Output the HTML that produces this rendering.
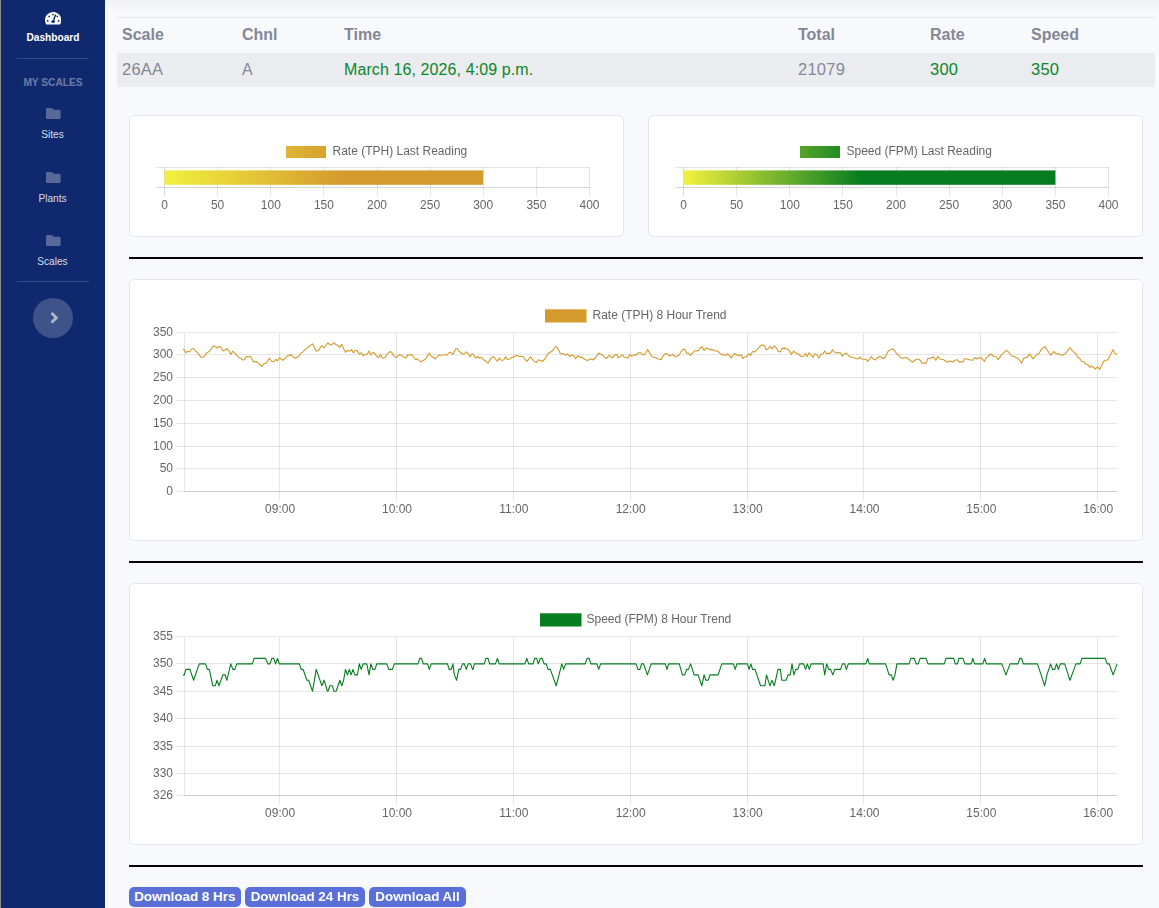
<!DOCTYPE html>
<html><head><meta charset="utf-8">
<style>
*{box-sizing:border-box;margin:0;padding:0}
html,body{width:1159px;height:908px;overflow:hidden;background:#f8f9fc;font-family:"Liberation Sans",sans-serif;}
body{position:relative}
#edge{position:absolute;left:0;top:0;width:1px;height:908px;background:#8a8a8a;z-index:5}
#sb{position:absolute;left:0;top:0;width:105px;height:908px;background:#10296e;color:#fff}
#sb .t{position:absolute;left:0;width:105px;text-align:center;font-size:10.4px;line-height:12px;white-space:nowrap}
#sb .dv{position:absolute;left:17px;width:72px;height:1px;background:rgba(255,255,255,.16)}
#sb svg{position:absolute}
#shadow{position:absolute;left:105px;top:0;width:1054px;height:12px;background:linear-gradient(#f0f1f4,#f8f9fc)}
table{position:absolute;left:117px;top:17px;width:1038px;border-collapse:collapse;font-size:16px;color:#858796}
th,td{text-align:left;padding:0 0 0 5px;font-weight:400;white-space:nowrap}
th{height:35px;font-weight:700;border-top:1px solid #e3e6f0;}
td{height:34px;background:#ebecef}
.g{color:#0a872a}
.n{font-size:16.5px;letter-spacing:.25px}
.card{position:absolute;background:#fff;border:1px solid #e3e6f0;border-radius:5.6px}
.hr{position:absolute;left:129px;width:1014px;height:2px;background:#000}
.btn{position:absolute;top:887px;height:20px;background:#5a70d8;color:#fff;border-radius:5px;font-weight:700;font-size:13.4px;line-height:19px;text-align:center;white-space:nowrap}
svg text{font-family:"Liberation Sans",sans-serif;font-size:12px;fill:#666}
</style></head><body>
<div id="sb">
  <div class="t" style="top:32.3px;font-weight:700;font-size:10.15px;left:0.5px">Dashboard</div>
  <div class="dv" style="top:58px"></div>
  <div class="t" style="top:77px;font-weight:700;font-size:10.2px;left:0.5px;color:rgba(255,255,255,.4)">MY SCALES</div>
  <div class="t" style="top:128.6px;font-size:10.1px;color:rgba(255,255,255,.85)">Sites</div>
  <div class="t" style="top:192.6px;font-size:10.1px;color:rgba(255,255,255,.85)">Plants</div>
  <div class="t" style="top:255.6px;font-size:10.1px;color:rgba(255,255,255,.85)">Scales</div>
  <div class="dv" style="top:281px"></div>
  <div style="position:absolute;left:33px;top:298px;width:40px;height:40px;border-radius:50%;background:rgba(255,255,255,.2)"></div>

<svg style="left:45.1px;top:10.5px" width="16.3" height="14.5" viewBox="0 0 576 512"><path fill="#fff" d="M288 32C128.940 32 0 160.940 0 320c0 52.800 14.250 102.260 39.060 144.800 5.610 9.620 16.300 15.200 27.440 15.200h443c11.140 0 21.830-5.580 27.440-15.200C561.750 422.260 576 372.800 576 320c0-159.060-128.940-288-288-288zm0 64c14.710 0 26.580 10.130 30.320 23.650-1.110 2.260-2.640 4.230-3.450 6.670l-9.220 27.670c-5.130 3.490-10.970 6.010-17.640 6.010-17.670 0-32-14.330-32-32S270.330 96 288 96zM96 384c-17.670 0-32-14.330-32-32s14.330-32 32-32 32 14.330 32 32-14.330 32-32 32zm48-160c-17.670 0-32-14.330-32-32s14.330-32 32-32 32 14.330 32 32-14.330 32-32 32zm246.770-72.410l-61.330 184C343.130 347.330 352 364.540 352 384c0 11.720-3.380 22.550-8.880 32H232.880c-5.500-9.450-8.880-20.280-8.880-32 0-33.940 26.500-61.430 59.900-63.590l61.340-184.010c4.170-12.560 17.730-19.450 30.360-15.170 12.570 4.190 19.350 17.790 15.170 30.360zm14.660 57.200l15.520-46.550c3.470-1.290 7.130-2.230 11.050-2.230 17.670 0 32 14.330 32 32s-14.330 32-32 32c-11.380-.010-20.890-6.280-26.570-15.220zM480 384c-17.670 0-32-14.330-32-32s14.330-32 32-32 32 14.330 32 32-14.330 32-32 32z"/></svg>
<svg style="left:46.1px;top:108px" width="14.6" height="11" viewBox="0 0 512 384" preserveAspectRatio="none"><path fill="rgba(255,255,255,.3)" d="M464 64H272l-64-64H48C21.490 0 0 21.490 0 48v288c0 26.510 21.490 48 48 48h416c26.510 0 48-21.490 48-48V112c0-26.510-21.490-48-48-48z"/></svg><svg style="left:46.1px;top:172px" width="14.6" height="11" viewBox="0 0 512 384" preserveAspectRatio="none"><path fill="rgba(255,255,255,.3)" d="M464 64H272l-64-64H48C21.490 0 0 21.490 0 48v288c0 26.510 21.490 48 48 48h416c26.510 0 48-21.490 48-48V112c0-26.510-21.490-48-48-48z"/></svg><svg style="left:46.1px;top:235px" width="14.6" height="11" viewBox="0 0 512 384" preserveAspectRatio="none"><path fill="rgba(255,255,255,.3)" d="M464 64H272l-64-64H48C21.490 0 0 21.490 0 48v288c0 26.510 21.490 48 48 48h416c26.510 0 48-21.490 48-48V112c0-26.510-21.490-48-48-48z"/></svg><svg style="left:49.9px;top:309.2px" width="8.8" height="17.6" viewBox="0 0 256 512"><path fill="rgba(255,255,255,.6)" d="M224.300 273l-136 136c-9.400 9.400-24.600 9.400-33.900 0l-22.600-22.600c-9.400-9.400-9.400-24.600 0-33.900l96.400-96.400-96.400-96.400c-9.400-9.400-9.400-24.600 0-33.900L54.300 103c9.400-9.400 24.600-9.400 33.900 0l136 136c9.500 9.400 9.500 24.600.1 34z"/></svg>
</div>
<div id="edge"></div>
<div id="shadow"></div>
<table>
<tr><th style="width:120px">Scale</th><th style="width:102px">Chnl</th><th style="width:454px">Time</th><th style="width:132px">Total</th><th style="width:101px">Rate</th><th>Speed</th></tr>
<tr><td class="n">26AA</td><td>A</td><td class="g" style="letter-spacing:.1px">March 16, 2026, 4:09 p.m.</td><td class="n">21079</td><td class="g n">300</td><td class="g n">350</td></tr>
</table>
<div class="card" style="left:129px;top:115px;width:495px;height:122px"></div>
<div class="card" style="left:648px;top:115px;width:495px;height:122px"></div>
<div class="hr" style="top:257px"></div>
<div class="card" style="left:129px;top:279px;width:1014px;height:262px"></div>
<div class="hr" style="top:561px"></div>
<div class="card" style="left:129px;top:583px;width:1014px;height:262px"></div>
<div class="hr" style="top:865px"></div>
<svg id="ch" width="1159" height="908" viewBox="0 0 1159 908" style="position:absolute;left:0;top:0;will-change:transform">
<defs><linearGradient id="g1" gradientUnits="userSpaceOnUse" x1="166" y1="0" x2="342" y2="0"><stop offset="0" stop-color="#f2f03e"/><stop offset="1" stop-color="#d49a2e"/></linearGradient><linearGradient id="g2" gradientUnits="userSpaceOnUse" x1="685" y1="0" x2="861" y2="0"><stop offset="0" stop-color="#f2f03e"/><stop offset="1" stop-color="#067d1f"/></linearGradient></defs>
<g shape-rendering="crispEdges" fill="none" stroke-width="1">
<line x1="164.5" y1="167" x2="164.5" y2="195.5" stroke="rgba(0,0,0,0.14)"/>
<line x1="217.5" y1="167" x2="217.5" y2="195.5" stroke="rgba(0,0,0,0.1)"/>
<line x1="270.5" y1="167" x2="270.5" y2="195.5" stroke="rgba(0,0,0,0.1)"/>
<line x1="323.5" y1="167" x2="323.5" y2="195.5" stroke="rgba(0,0,0,0.1)"/>
<line x1="377.5" y1="167" x2="377.5" y2="195.5" stroke="rgba(0,0,0,0.1)"/>
<line x1="430.5" y1="167" x2="430.5" y2="195.5" stroke="rgba(0,0,0,0.1)"/>
<line x1="483.5" y1="167" x2="483.5" y2="195.5" stroke="rgba(0,0,0,0.1)"/>
<line x1="536.5" y1="167" x2="536.5" y2="195.5" stroke="rgba(0,0,0,0.1)"/>
<line x1="589.5" y1="167" x2="589.5" y2="195.5" stroke="rgba(0,0,0,0.1)"/>
<line x1="156.0" y1="167.5" x2="589.5" y2="167.5" stroke="rgba(0,0,0,0.1)"/>
<line x1="156.0" y1="187.5" x2="589.5" y2="187.5" stroke="rgba(0,0,0,0.16)"/>
</g>
<rect x="164.5" y="170.4" width="318.75" height="14.4" fill="url(#g1)"/>
<rect x="286.0" y="146" width="40" height="12" fill="url(#g1)"/>
<text x="332.5" y="154.6">Rate (TPH) Last Reading</text>
<text x="164.5" y="208.6" text-anchor="middle">0</text>
<text x="217.6" y="208.6" text-anchor="middle">50</text>
<text x="270.8" y="208.6" text-anchor="middle">100</text>
<text x="323.9" y="208.6" text-anchor="middle">150</text>
<text x="377.0" y="208.6" text-anchor="middle">200</text>
<text x="430.1" y="208.6" text-anchor="middle">250</text>
<text x="483.2" y="208.6" text-anchor="middle">300</text>
<text x="536.4" y="208.6" text-anchor="middle">350</text>
<text x="589.5" y="208.6" text-anchor="middle">400</text>
<g shape-rendering="crispEdges" fill="none" stroke-width="1">
<line x1="683.5" y1="167" x2="683.5" y2="195.5" stroke="rgba(0,0,0,0.14)"/>
<line x1="736.5" y1="167" x2="736.5" y2="195.5" stroke="rgba(0,0,0,0.1)"/>
<line x1="789.5" y1="167" x2="789.5" y2="195.5" stroke="rgba(0,0,0,0.1)"/>
<line x1="842.5" y1="167" x2="842.5" y2="195.5" stroke="rgba(0,0,0,0.1)"/>
<line x1="896.5" y1="167" x2="896.5" y2="195.5" stroke="rgba(0,0,0,0.1)"/>
<line x1="949.5" y1="167" x2="949.5" y2="195.5" stroke="rgba(0,0,0,0.1)"/>
<line x1="1002.5" y1="167" x2="1002.5" y2="195.5" stroke="rgba(0,0,0,0.1)"/>
<line x1="1055.5" y1="167" x2="1055.5" y2="195.5" stroke="rgba(0,0,0,0.1)"/>
<line x1="1108.5" y1="167" x2="1108.5" y2="195.5" stroke="rgba(0,0,0,0.1)"/>
<line x1="675.0" y1="167.5" x2="1108.5" y2="167.5" stroke="rgba(0,0,0,0.1)"/>
<line x1="675.0" y1="187.5" x2="1108.5" y2="187.5" stroke="rgba(0,0,0,0.16)"/>
</g>
<rect x="683.5" y="170.4" width="371.88" height="14.4" fill="url(#g2)"/>
<rect x="800.0" y="146" width="40" height="12" fill="url(#g2)"/>
<text x="846.5" y="154.6">Speed (FPM) Last Reading</text>
<text x="683.5" y="208.6" text-anchor="middle">0</text>
<text x="736.6" y="208.6" text-anchor="middle">50</text>
<text x="789.8" y="208.6" text-anchor="middle">100</text>
<text x="842.9" y="208.6" text-anchor="middle">150</text>
<text x="896.0" y="208.6" text-anchor="middle">200</text>
<text x="949.1" y="208.6" text-anchor="middle">250</text>
<text x="1002.2" y="208.6" text-anchor="middle">300</text>
<text x="1055.4" y="208.6" text-anchor="middle">350</text>
<text x="1108.5" y="208.6" text-anchor="middle">400</text>
<g shape-rendering="crispEdges" fill="none" stroke-width="1">
<line x1="175.5" y1="332.5" x2="1117" y2="332.5" stroke="rgba(0,0,0,0.1)"/>
<line x1="175.5" y1="354.5" x2="1117" y2="354.5" stroke="rgba(0,0,0,0.1)"/>
<line x1="175.5" y1="377.5" x2="1117" y2="377.5" stroke="rgba(0,0,0,0.1)"/>
<line x1="175.5" y1="400.5" x2="1117" y2="400.5" stroke="rgba(0,0,0,0.1)"/>
<line x1="175.5" y1="423.5" x2="1117" y2="423.5" stroke="rgba(0,0,0,0.1)"/>
<line x1="175.5" y1="446.5" x2="1117" y2="446.5" stroke="rgba(0,0,0,0.1)"/>
<line x1="175.5" y1="468.5" x2="1117" y2="468.5" stroke="rgba(0,0,0,0.1)"/>
<line x1="175.5" y1="491.5" x2="184" y2="491.5" stroke="rgba(0,0,0,0.1)"/>
<line x1="184" y1="491.5" x2="1117" y2="491.5" stroke="rgba(0,0,0,0.2)"/>
<line x1="184.5" y1="332.5" x2="184.5" y2="490.5" stroke="rgba(0,0,0,0.1)"/>
<line x1="279.5" y1="332.5" x2="279.5" y2="499.5" stroke="rgba(0,0,0,0.1)"/>
<line x1="396.5" y1="332.5" x2="396.5" y2="499.5" stroke="rgba(0,0,0,0.1)"/>
<line x1="513.5" y1="332.5" x2="513.5" y2="499.5" stroke="rgba(0,0,0,0.1)"/>
<line x1="630.5" y1="332.5" x2="630.5" y2="499.5" stroke="rgba(0,0,0,0.1)"/>
<line x1="747.5" y1="332.5" x2="747.5" y2="499.5" stroke="rgba(0,0,0,0.1)"/>
<line x1="863.5" y1="332.5" x2="863.5" y2="499.5" stroke="rgba(0,0,0,0.1)"/>
<line x1="980.5" y1="332.5" x2="980.5" y2="499.5" stroke="rgba(0,0,0,0.1)"/>
<line x1="1097.5" y1="332.5" x2="1097.5" y2="499.5" stroke="rgba(0,0,0,0.1)"/>
</g>
<text x="173" y="335.5" text-anchor="end">350</text>
<text x="173" y="357.5" text-anchor="end">300</text>
<text x="173" y="380.5" text-anchor="end">250</text>
<text x="173" y="403.5" text-anchor="end">200</text>
<text x="173" y="426.5" text-anchor="end">150</text>
<text x="173" y="449.5" text-anchor="end">100</text>
<text x="173" y="471.5" text-anchor="end">50</text>
<text x="173" y="494.5" text-anchor="end">0</text>
<text x="280.1" y="512.8" text-anchor="middle">09:00</text>
<text x="397.0" y="512.8" text-anchor="middle">10:00</text>
<text x="513.8" y="512.8" text-anchor="middle">11:00</text>
<text x="630.7" y="512.8" text-anchor="middle">12:00</text>
<text x="747.6" y="512.8" text-anchor="middle">13:00</text>
<text x="864.5" y="512.8" text-anchor="middle">14:00</text>
<text x="981.3" y="512.8" text-anchor="middle">15:00</text>
<text x="1098.2" y="512.8" text-anchor="middle">16:00</text>
<rect x="545.0" y="309.3" width="41.5" height="13.2" fill="#d49a2e"/>
<text x="592.5" y="319.0">Rate (TPH) 8 Hour Trend</text>
<path d="M183.0 349.0 L184.3 349.8 L185.8 352.8 L187.8 351.3 L189.5 352.0 L191.5 349.0 L193.6 348.5 L195.5 350.6 L198.0 353.1 L201.1 357.3 L203.6 357.3 L206.8 352.8 L209.3 351.5 L212.8 346.6 L215.3 346.0 L217.0 348.0 L219.0 346.5 L220.9 346.9 L222.8 351.0 L224.9 350.3 L226.8 348.5 L228.7 350.6 L230.8 354.4 L232.8 351.3 L234.9 353.1 L238.7 357.5 L240.8 358.3 L242.8 360.0 L244.3 359.8 L246.2 356.5 L248.3 356.9 L250.3 356.3 L253.7 361.9 L256.2 361.5 L258.1 362.8 L261.8 366.3 L264.1 363.5 L266.2 363.3 L269.3 358.3 L271.8 361.5 L274.3 361.3 L275.8 359.4 L277.5 361.0 L279.3 357.8 L283.1 360.3 L287.5 355.6 L289.1 355.8 L290.8 354.5 L293.1 356.9 L295.0 358.3 L298.7 356.5 L301.2 352.8 L302.5 352.5 L305.0 349.4 L308.1 347.5 L312.5 343.8 L314.4 347.5 L316.2 351.3 L318.4 350.3 L321.9 345.6 L324.1 347.8 L327.5 343.0 L328.0 342.8 L329.9 344.8 L331.8 344.8 L334.0 342.5 L336.1 344.8 L338.0 345.6 L339.9 347.3 L341.8 344.4 L343.6 348.8 L345.5 352.3 L347.4 350.3 L349.3 351.3 L351.5 349.6 L353.4 352.9 L355.3 350.3 L357.2 350.9 L359.3 354.0 L361.2 352.8 L363.0 355.6 L364.9 354.6 L367.4 354.0 L369.0 351.0 L370.9 355.0 L372.8 352.5 L374.7 353.5 L376.8 356.3 L378.7 357.5 L380.5 354.6 L382.4 358.3 L384.9 357.8 L386.8 354.4 L390.3 351.5 L391.8 352.5 L393.7 355.6 L396.2 357.5 L399.9 354.4 L403.1 356.5 L405.8 358.1 L408.1 354.4 L409.9 355.3 L411.8 354.6 L415.6 359.8 L417.5 358.8 L419.3 361.0 L421.6 361.5 L425.6 359.0 L429.3 353.1 L431.2 356.0 L435.6 359.0 L438.7 355.0 L440.6 355.3 L443.1 355.0 L445.0 354.4 L446.9 355.3 L448.7 352.8 L451.2 352.5 L452.9 354.4 L455.6 349.0 L457.1 348.5 L458.7 351.0 L462.5 354.0 L464.4 354.0 L466.2 351.9 L468.1 353.5 L470.4 356.9 L471.6 354.0 L473.0 354.0 L475.5 358.1 L477.8 356.5 L479.3 358.1 L481.5 357.3 L484.3 360.3 L486.1 361.3 L488.0 363.1 L491.1 358.1 L493.6 356.5 L495.5 359.0 L497.4 361.3 L499.3 358.1 L501.5 360.3 L503.7 360.0 L505.5 356.9 L507.4 359.4 L509.9 359.0 L511.8 357.3 L513.7 356.9 L516.5 355.3 L519.3 356.5 L523.0 356.5 L526.8 361.3 L530.6 356.9 L534.3 361.5 L536.6 362.5 L538.3 359.8 L540.6 360.6 L542.4 361.5 L544.9 359.0 L547.8 353.8 L551.8 351.3 L555.6 346.5 L557.1 347.3 L560.0 353.1 L561.8 354.0 L564.1 353.8 L565.8 355.3 L567.8 353.8 L569.6 356.5 L571.8 355.0 L573.7 355.6 L575.6 358.8 L577.8 355.6 L580.0 357.3 L581.8 356.9 L583.7 358.8 L587.5 360.6 L591.2 358.8 L593.1 360.0 L595.6 357.5 L598.7 353.1 L603.1 355.6 L606.6 358.5 L608.7 355.6 L610.6 356.3 L612.5 357.8 L615.0 354.8 L616.9 354.4 L618.0 357.8 L620.5 356.5 L622.4 354.4 L624.0 357.3 L626.1 357.5 L628.0 358.1 L629.9 354.4 L631.8 356.3 L633.6 354.8 L636.1 355.0 L638.0 353.1 L640.3 352.5 L642.0 354.4 L644.0 355.0 L645.8 352.8 L647.8 349.4 L649.3 352.5 L651.5 356.3 L653.7 357.3 L655.5 357.5 L657.8 358.8 L661.2 359.8 L663.0 356.3 L664.9 353.8 L666.8 353.5 L668.7 355.6 L670.5 355.6 L672.8 354.4 L674.9 356.5 L677.4 356.0 L679.3 354.8 L681.2 351.3 L683.1 349.4 L684.9 349.4 L686.6 353.1 L688.3 353.1 L690.3 355.3 L694.1 351.3 L696.2 350.6 L698.1 351.0 L699.9 348.5 L702.1 346.5 L704.1 350.6 L705.8 348.1 L708.1 348.8 L710.0 349.8 L711.8 349.4 L714.3 350.6 L718.1 351.3 L721.6 354.8 L723.7 354.4 L725.6 355.6 L727.5 353.8 L729.3 355.0 L731.2 358.1 L733.1 355.0 L735.0 353.5 L736.9 355.0 L739.4 355.6 L741.2 354.8 L742.9 358.5 L745.0 356.9 L746.9 356.5 L748.7 353.8 L750.6 355.3 L752.5 351.5 L754.4 351.9 L756.9 350.0 L760.6 345.6 L762.5 344.9 L763.0 345.0 L764.5 345.6 L766.1 350.0 L768.0 348.8 L770.3 346.5 L772.0 348.8 L774.3 346.0 L776.1 347.5 L778.0 351.3 L780.3 351.9 L781.8 348.5 L784.3 348.1 L786.8 348.8 L789.3 350.6 L791.5 354.4 L793.4 351.0 L795.3 352.8 L797.4 353.5 L801.2 356.5 L803.7 356.3 L805.3 353.5 L807.0 356.5 L809.0 352.8 L811.2 355.0 L813.0 357.5 L814.9 353.8 L817.0 354.8 L818.9 358.1 L820.6 354.4 L823.1 353.8 L824.7 351.0 L826.8 353.8 L829.3 353.1 L830.8 353.1 L832.4 349.8 L834.3 351.9 L836.2 353.1 L838.1 352.5 L840.6 352.8 L842.1 356.3 L844.3 353.8 L846.2 353.1 L849.3 356.5 L851.8 357.5 L854.3 357.8 L858.1 359.0 L860.0 356.9 L861.8 359.0 L866.2 359.4 L867.8 361.5 L871.2 356.5 L873.1 359.0 L875.6 360.0 L877.1 357.8 L880.0 356.5 L881.9 357.3 L883.4 358.8 L885.0 357.5 L888.1 351.3 L889.6 350.3 L893.1 348.8 L896.9 354.0 L898.7 355.0 L900.6 357.8 L903.1 358.1 L906.3 357.5 L908.0 358.5 L910.5 360.6 L912.4 362.3 L915.5 359.8 L918.6 359.0 L920.5 360.6 L922.0 363.1 L926.1 363.1 L928.0 358.5 L931.1 358.1 L933.6 356.9 L935.8 360.3 L937.8 356.3 L939.9 359.0 L943.7 359.8 L947.4 362.3 L949.9 361.0 L953.0 361.9 L955.5 360.0 L957.4 359.8 L959.3 361.9 L963.0 361.9 L964.9 358.5 L969.3 359.8 L972.4 360.3 L974.9 357.5 L976.6 359.0 L978.7 357.8 L980.6 357.5 L984.6 361.3 L986.2 358.1 L990.3 354.0 L994.3 356.5 L996.2 356.9 L998.3 359.8 L1001.8 354.4 L1006.2 350.6 L1008.1 351.5 L1011.8 356.0 L1014.3 356.5 L1018.1 358.5 L1021.6 363.1 L1023.7 358.5 L1027.5 356.9 L1029.4 353.8 L1033.1 358.8 L1036.9 354.4 L1039.1 353.5 L1041.2 349.4 L1045.0 346.5 L1048.1 351.3 L1050.6 355.3 L1052.5 352.8 L1054.0 351.3 L1055.9 353.8 L1057.8 353.5 L1061.5 355.3 L1064.7 354.0 L1067.2 351.3 L1070.0 347.5 L1072.2 350.6 L1075.9 353.8 L1077.8 357.3 L1079.7 358.5 L1081.6 361.3 L1084.1 361.5 L1085.9 364.4 L1088.4 365.0 L1089.7 367.3 L1091.6 366.0 L1095.3 369.0 L1097.6 366.9 L1099.7 369.4 L1103.5 361.5 L1105.3 360.3 L1107.6 360.0 L1113.1 349.8 L1114.7 353.1 L1117.2 354.8" fill="none" stroke="#d49a2e" stroke-width="1.1" stroke-linejoin="round"/>
<g shape-rendering="crispEdges" fill="none" stroke-width="1">
<line x1="175.5" y1="636.5" x2="1117" y2="636.5" stroke="rgba(0,0,0,0.1)"/>
<line x1="175.5" y1="663.5" x2="1117" y2="663.5" stroke="rgba(0,0,0,0.1)"/>
<line x1="175.5" y1="691.5" x2="1117" y2="691.5" stroke="rgba(0,0,0,0.1)"/>
<line x1="175.5" y1="718.5" x2="1117" y2="718.5" stroke="rgba(0,0,0,0.1)"/>
<line x1="175.5" y1="746.5" x2="1117" y2="746.5" stroke="rgba(0,0,0,0.1)"/>
<line x1="175.5" y1="773.5" x2="1117" y2="773.5" stroke="rgba(0,0,0,0.1)"/>
<line x1="175.5" y1="795.5" x2="184" y2="795.5" stroke="rgba(0,0,0,0.1)"/>
<line x1="184" y1="795.5" x2="1117" y2="795.5" stroke="rgba(0,0,0,0.2)"/>
<line x1="184.5" y1="636.5" x2="184.5" y2="794.5" stroke="rgba(0,0,0,0.1)"/>
<line x1="279.5" y1="636.5" x2="279.5" y2="803.5" stroke="rgba(0,0,0,0.1)"/>
<line x1="396.5" y1="636.5" x2="396.5" y2="803.5" stroke="rgba(0,0,0,0.1)"/>
<line x1="513.5" y1="636.5" x2="513.5" y2="803.5" stroke="rgba(0,0,0,0.1)"/>
<line x1="630.5" y1="636.5" x2="630.5" y2="803.5" stroke="rgba(0,0,0,0.1)"/>
<line x1="747.5" y1="636.5" x2="747.5" y2="803.5" stroke="rgba(0,0,0,0.1)"/>
<line x1="863.5" y1="636.5" x2="863.5" y2="803.5" stroke="rgba(0,0,0,0.1)"/>
<line x1="980.5" y1="636.5" x2="980.5" y2="803.5" stroke="rgba(0,0,0,0.1)"/>
<line x1="1097.5" y1="636.5" x2="1097.5" y2="803.5" stroke="rgba(0,0,0,0.1)"/>
</g>
<text x="173" y="639.5" text-anchor="end">355</text>
<text x="173" y="666.5" text-anchor="end">350</text>
<text x="173" y="694.5" text-anchor="end">345</text>
<text x="173" y="721.5" text-anchor="end">340</text>
<text x="173" y="749.5" text-anchor="end">335</text>
<text x="173" y="776.5" text-anchor="end">330</text>
<text x="173" y="798.5" text-anchor="end">326</text>
<text x="280.1" y="816.8" text-anchor="middle">09:00</text>
<text x="397.0" y="816.8" text-anchor="middle">10:00</text>
<text x="513.8" y="816.8" text-anchor="middle">11:00</text>
<text x="630.7" y="816.8" text-anchor="middle">12:00</text>
<text x="747.6" y="816.8" text-anchor="middle">13:00</text>
<text x="864.5" y="816.8" text-anchor="middle">14:00</text>
<text x="981.3" y="816.8" text-anchor="middle">15:00</text>
<text x="1098.2" y="816.8" text-anchor="middle">16:00</text>
<rect x="540.0" y="613.3" width="41.5" height="13.2" fill="#067d1f"/>
<text x="586.5" y="623.0">Speed (FPM) 8 Hour Trend</text>
<path d="M183.0 674.9 L184.3 674.9 L185.8 669.4 L189.9 669.4 L193.6 680.3 L199.3 663.9 L205.5 663.9 L207.4 669.4 L209.3 669.4 L212.8 685.8 L215.3 685.8 L217.0 680.3 L219.0 685.8 L222.8 674.9 L225.3 674.9 L226.8 680.3 L230.8 663.9 L232.8 669.4 L234.9 669.4 L236.8 663.9 L252.4 663.9 L254.1 658.4 L265.6 658.4 L267.8 663.9 L270.0 663.9 L271.8 658.4 L273.7 658.4 L275.6 663.9 L277.5 658.4 L279.3 663.9 L299.4 663.9 L301.2 669.4 L303.1 669.4 L306.9 680.3 L308.7 680.3 L312.5 691.3 L316.2 669.4 L321.9 685.8 L324.1 680.3 L327.5 691.3 L328.0 691.3 L329.9 685.8 L332.4 685.8 L334.0 691.3 L336.1 691.3 L339.9 680.3 L341.8 685.8 L343.6 680.3 L345.5 669.4 L347.4 674.9 L349.3 669.4 L351.1 674.9 L353.0 669.4 L354.9 674.9 L357.4 674.9 L359.3 663.9 L361.2 669.4 L363.0 663.9 L366.8 663.9 L369.0 674.9 L370.9 663.9 L372.8 669.4 L374.9 669.4 L376.8 663.9 L386.8 663.9 L388.7 669.4 L392.4 669.4 L394.3 663.9 L418.1 663.9 L419.7 658.4 L421.6 658.4 L423.3 663.9 L427.5 663.9 L429.3 669.4 L431.2 663.9 L447.5 663.9 L449.1 669.4 L451.2 669.4 L452.9 663.9 L454.4 674.9 L456.6 680.3 L458.7 669.4 L460.6 669.4 L462.5 663.9 L464.4 663.9 L466.2 669.4 L468.1 663.9 L470.6 663.9 L472.5 669.4 L473.0 669.4 L474.3 663.9 L484.3 663.9 L485.9 658.4 L488.0 658.4 L489.6 663.9 L495.5 663.9 L497.4 658.4 L499.3 663.9 L524.9 663.9 L526.8 658.4 L528.7 663.9 L533.1 663.9 L534.7 658.4 L536.6 658.4 L538.3 663.9 L540.3 658.4 L542.2 658.4 L544.1 663.9 L546.2 663.9 L548.1 669.4 L550.3 669.4 L556.2 685.8 L561.8 663.9 L563.7 669.4 L565.6 663.9 L585.3 663.9 L587.1 658.4 L589.1 658.4 L590.9 663.9 L596.9 663.9 L598.7 669.4 L600.6 663.9 L617.5 663.9 L618.0 663.9 L636.1 663.9 L637.8 669.4 L639.9 669.4 L641.5 663.9 L643.6 663.9 L647.4 674.9 L651.2 663.9 L665.3 663.9 L667.0 669.4 L668.7 663.9 L679.3 663.9 L682.4 674.9 L684.7 674.9 L686.6 669.4 L688.4 669.4 L690.6 663.9 L694.1 674.9 L698.1 674.9 L701.8 685.8 L704.1 674.9 L706.0 680.3 L708.1 680.3 L710.0 674.9 L718.1 674.9 L721.8 663.9 L733.4 663.9 L735.2 669.4 L736.9 663.9 L747.5 663.9 L749.1 669.4 L750.9 663.9 L752.5 669.4 L755.0 669.4 L760.6 685.8 L762.5 685.8 L763.0 685.8 L764.9 685.8 L766.5 674.9 L769.9 685.8 L772.0 680.3 L774.3 685.8 L778.0 669.4 L780.3 669.4 L781.8 680.3 L786.1 680.3 L788.0 674.9 L790.3 674.9 L792.0 663.9 L793.9 674.9 L795.8 669.4 L797.8 669.4 L799.5 663.9 L803.7 663.9 L805.5 669.4 L807.4 663.9 L809.3 669.4 L811.2 663.9 L823.1 663.9 L824.7 674.9 L826.8 663.9 L828.7 669.4 L830.6 669.4 L832.8 674.9 L834.7 669.4 L840.6 669.4 L842.4 663.9 L844.6 663.9 L846.4 669.4 L848.3 663.9 L865.8 663.9 L867.7 658.4 L869.3 663.9 L885.6 663.9 L889.1 674.9 L891.2 674.9 L893.1 680.3 L895.0 674.9 L896.9 663.9 L907.5 663.9 L908.0 663.9 L909.0 663.9 L910.8 658.4 L914.3 658.4 L916.1 663.9 L918.3 663.9 L920.1 658.4 L926.1 658.4 L928.0 663.9 L944.3 663.9 L945.9 658.4 L953.7 658.4 L955.3 663.9 L957.4 663.9 L959.0 658.4 L963.0 658.4 L964.9 663.9 L971.2 663.9 L972.8 658.4 L974.6 663.9 L982.8 663.9 L984.6 658.4 L986.4 663.9 L1001.8 663.9 L1006.0 674.9 L1010.0 663.9 L1018.1 663.9 L1019.7 658.4 L1021.6 658.4 L1023.4 663.9 L1037.5 663.9 L1044.7 685.8 L1046.9 674.9 L1050.6 663.9 L1052.5 669.4 L1054.7 669.4 L1056.5 663.9 L1058.4 669.4 L1060.3 663.9 L1064.7 663.9 L1070.0 680.3 L1075.9 663.9 L1080.1 663.9 L1081.8 658.4 L1105.3 658.4 L1107.2 663.9 L1109.3 663.9 L1113.1 674.9 L1117.2 663.9" fill="none" stroke="#067d1f" stroke-width="1.1" stroke-linejoin="round"/>
</svg>
<div class="btn" style="left:129px;width:111.5px">Download 8 Hrs</div>
<div class="btn" style="left:245px;width:120px">Download 24 Hrs</div>
<div class="btn" style="left:369px;width:97px">Download All</div>
</body></html>
